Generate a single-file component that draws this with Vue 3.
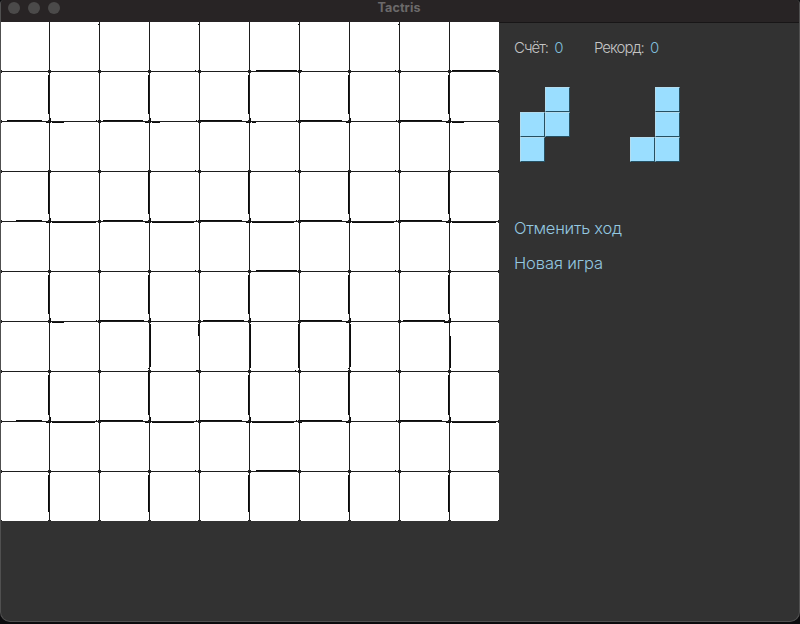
<script setup>
const cells = Array.from({ length: 100 }, (_, i) => i)

const nodes = []
for (let r = 0; r < 10; r++) {
  for (let c = 0; c < 11; c++) nodes.push({ x: c ? c * 50 - 3 : -2, y: 48 + r * 50 })
}

// Horizontal overdraw: [row line y, [from, to] ...]
const across = [
  [70, [256, 297], [452, 496], [195, 196], [395, 396], [299, 302]],
  [120, [7, 42], [103, 143], [200, 242], [300, 342], [400, 442], [96, 97], [196, 197], [296, 297], [396, 397]],
  [122, [46, 50], [52, 64], [145, 149], [152, 160], [246, 250], [252, 256], [346, 350], [446, 450], [452, 464]],
  [170, [195, 196], [295, 296], [395, 396]],
  [220, [16, 42], [103, 143], [200, 242], [300, 342], [400, 442], [196, 197], [296, 297], [396, 397]],
  [222, [46, 50], [52, 96], [145, 149], [152, 194], [246, 250], [252, 294], [346, 350], [352, 394], [446, 450], [452, 496]],
  [270, [256, 297], [195, 196], [395, 396]],
  [320, [100, 144], [203, 244], [300, 342], [403, 445], [96, 97]],
  [322, [52, 64], [346, 350], [444, 450]],
  [370, [196, 198], [295, 296], [396, 397]],
  [420, [16, 42], [100, 143], [200, 242], [300, 342], [400, 442], [96, 97], [196, 197], [296, 297], [396, 397]],
  [422, [46, 50], [52, 95], [145, 149], [152, 194], [246, 250], [252, 294], [299, 302], [346, 350], [446, 450], [452, 496]],
  [470, [256, 297], [195, 196], [395, 396]]
]

// Vertical overdraw: [column x, [from, to] ...]
const down = [
  [48, [75, 114], [172, 214], [275, 314], [375, 415], [475, 512]],
  [50, [118, 122], [218, 222], [318, 322], [417, 422]],
  [98, [24, 25]],
  [148, [75, 114], [172, 214], [275, 314], [368, 369], [372, 415], [475, 512]],
  [150, [118, 122], [218, 222], [318, 322], [324, 367], [417, 422]],
  [198, [24, 25], [324, 336]],
  [248, [75, 114], [172, 214], [275, 314], [375, 415], [475, 512]],
  [250, [118, 122], [218, 222], [318, 322], [324, 368], [417, 422]],
  [298, [24, 25], [324, 368]],
  [348, [75, 114], [172, 214], [275, 314], [368, 369], [372, 415], [475, 512]],
  [350, [118, 122], [218, 222], [318, 322], [324, 367], [417, 422]],
  [398, [24, 25]],
  [448, [75, 114], [172, 214], [275, 314], [375, 415], [475, 512]],
  [450, [118, 122], [218, 222], [318, 322], [336, 368], [417, 422]]
]

const overdraw = [
  ...across.map(([y, ...s]) => s.map(([a, b]) => `M${a - 1} ${y - 22}h${b - a}v1h${a - b}z`).join('')),
  ...down.map(([x, ...s]) => s.map(([a, b]) => `M${x - 1} ${a - 22}v${b - a}h1v${a - b}z`).join(''))
].join('')

const pieces = [
  [0, 1, 1, 1, 1, 0],
  [0, 1, 0, 1, 1, 1]
]
</script>

<template>
  <div class="desktop">
    <div class="window">
      <header class="titlebar">
        <div class="lights"><i></i><i></i><i></i></div>
        <h1>Tactris</h1>
      </header>
      <main class="content">
        <div class="board">
          <span v-for="c in cells" :key="c" class="cell"></span>
          <svg class="ink" width="498" height="499" viewBox="0 0 498 499" shape-rendering="crispEdges">
            <rect v-for="(n, i) in nodes" :key="i" :x="n.x" :y="n.y" width="3" height="3" fill="#242424" />
            <path :d="overdraw" fill="#0b0b0b" />
          </svg>
        </div>
        <aside class="panel">
          <div class="scores">
            <span>Счёт: <b>0</b></span>
            <span class="best">Рекорд: <b>0</b></span>
          </div>
          <div class="pieces">
            <div v-for="(p, i) in pieces" :key="i" class="piece">
              <span v-for="(on, j) in p" :key="j" :class="{ block: on }"></span>
            </div>
          </div>
          <nav class="actions">
            <a>Отменить ход</a>
            <a class="fresh">Новая игра</a>
          </nav>
        </aside>
      </main>
    </div>
  </div>
</template>

<style>
body {
  background: #0b0b0d;
}
</style>

<style scoped>
.desktop {
  height: 624px;
  background: #0b0b0d;
  overflow: hidden;
  font-family: Inter, "Liberation Sans", Arial, sans-serif;
  font-weight: 300;
}
.window {
  box-sizing: border-box;
  width: 800px;
  height: 622px;
  border: 1px solid #505050;
  border-top: 0;
  border-radius: 4px 4px 10px 10px;
  background: #323232;
  overflow: hidden;
}
.titlebar {
  box-sizing: border-box;
  height: 22px;
  background: #282425;
  display: grid;
  grid-template-columns: 1fr auto 1fr;
}
.lights {
  display: flex;
  gap: 8px;
  padding: 2px 0 0 7px;
}
.lights i {
  width: 12px;
  height: 12px;
  border-radius: 50%;
  background: #4b4a4a;
}
h1 {
  margin: 0 2px 0 0;
  font: 700 12.6px/15px Inter, sans-serif;
  letter-spacing: 0.1px;
  color: #6b696a;
}
.content {
  display: flex;
  align-items: flex-start;
}
.board {
  position: relative;
  display: grid;
  grid-template-columns: 48px repeat(9, 49px);
  grid-template-rows: repeat(10, 49px);
  gap: 1px;
  background: #1d1d1d;
}
.cell {
  background: #fff;
}
.ink {
  position: absolute;
  inset: 0;
}
.panel {
  flex: 1;
  border-top: 1px solid #181617;
}
.scores {
  display: flex;
  padding: 16px 0 0 15px;
  font-size: 15px;
  line-height: 18px;
  letter-spacing: -1px;
  color: #c4c4c4;
  white-space: nowrap;
}
.scores span {
  width: 80px;
}
.scores b {
  font-weight: 300;
  color: #7fbddb;
  margin-left: 3px;
}
.pieces {
  display: flex;
  gap: 60px;
  padding: 30px 0 0 21px;
}
.piece {
  display: grid;
  grid-template: repeat(3, 25px) / repeat(2, 25px);
}
.block {
  box-sizing: border-box;
  background: #9adeff;
  border: 1px solid #b4dcee;
  border-right-color: #245063;
  border-bottom-color: #245063;
}
.actions {
  display: flex;
  flex-direction: column;
  align-items: flex-start;
  gap: 15px;
  padding: 56px 0 0 15px;
  font-size: 16.5px;
  letter-spacing: -0.25px;
  line-height: 20px;
  color: #94c8e0;
}
.fresh {
  letter-spacing: -0.1px;
}
</style>
